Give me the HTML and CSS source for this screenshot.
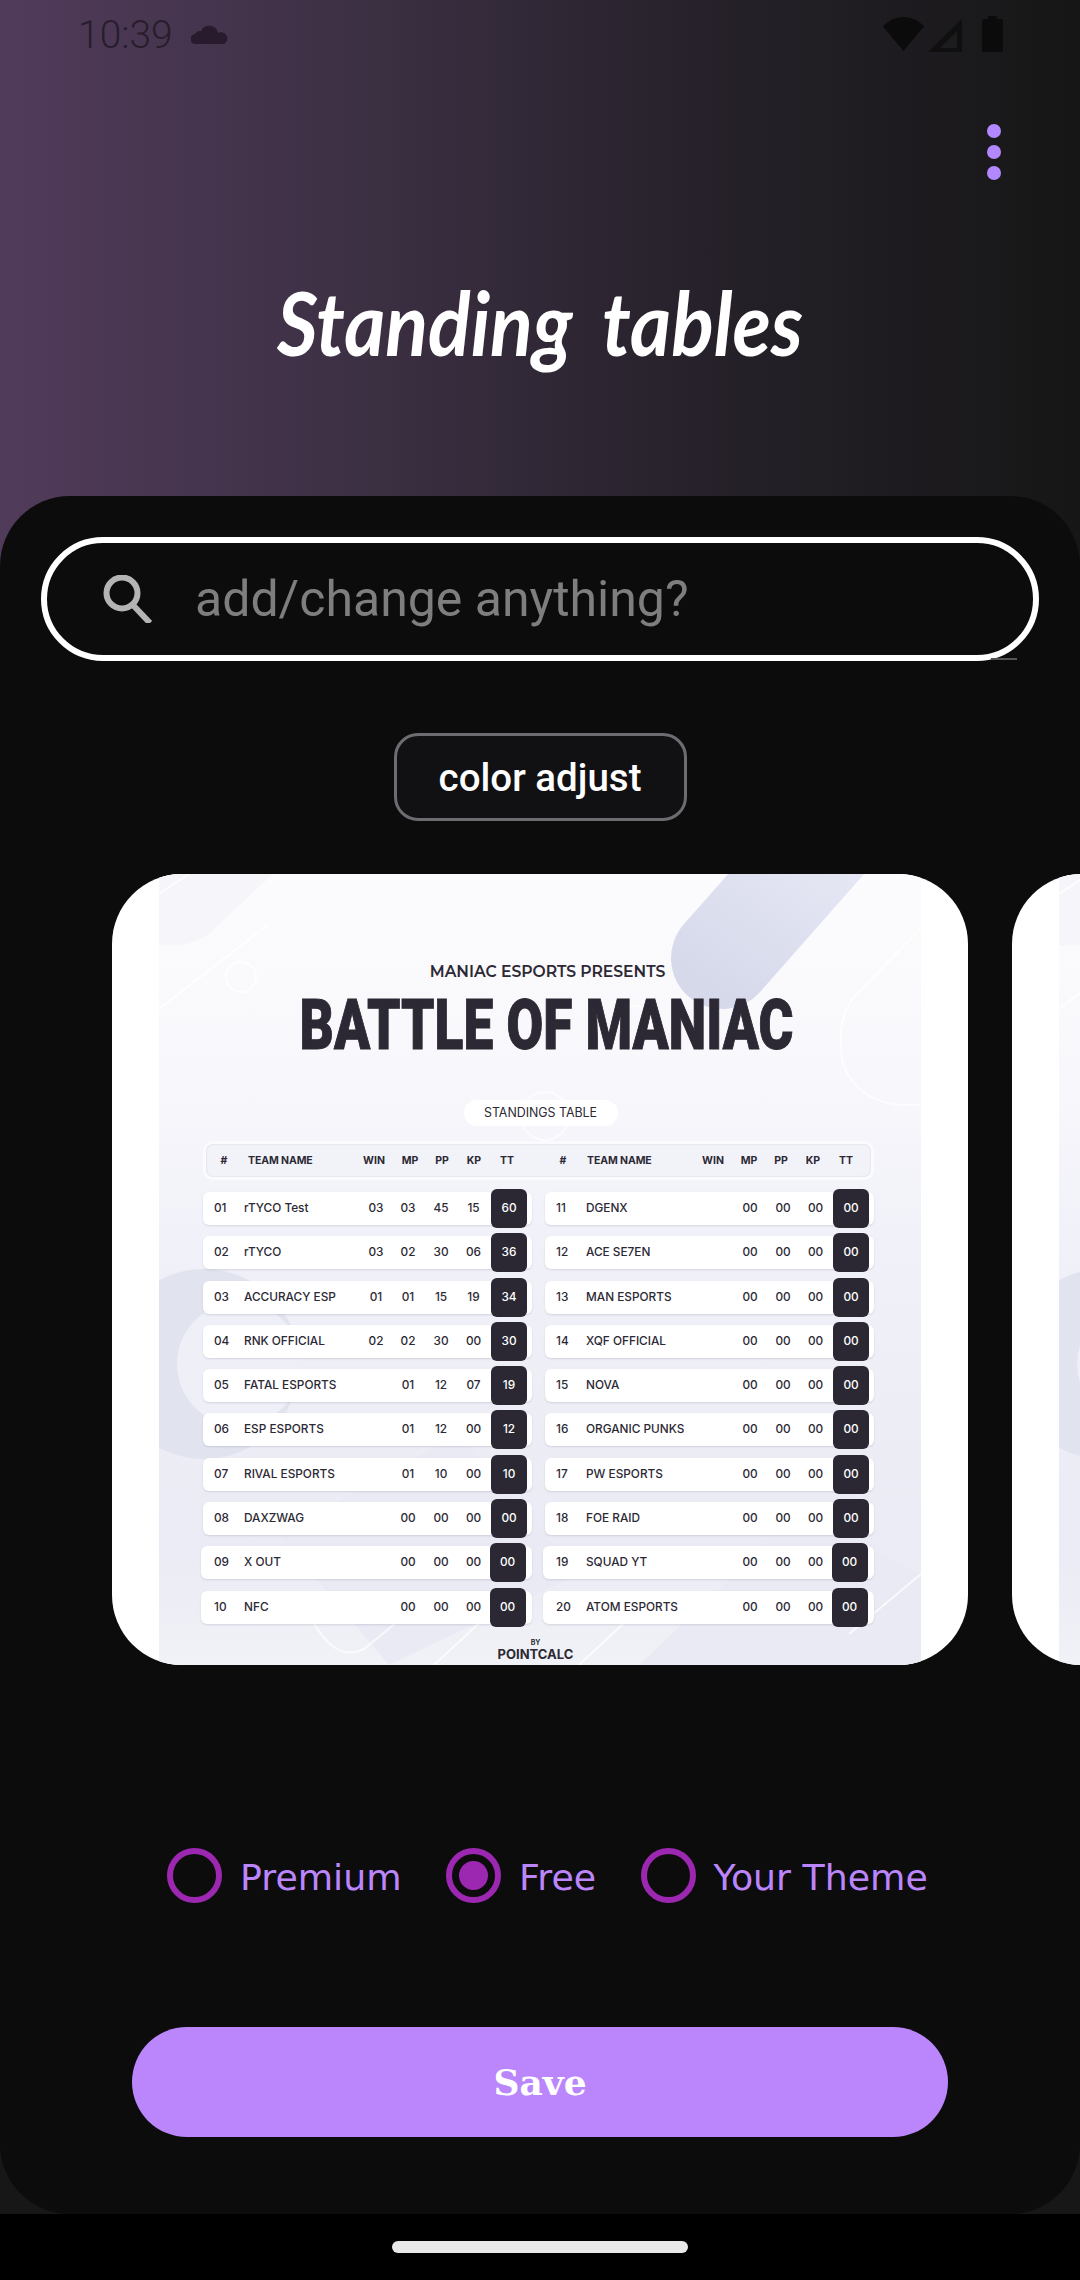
FILE: index.html
```html
<!DOCTYPE html>
<html lang="en">
<head>
    <meta charset="UTF-8">
    <meta name="viewport" content="width=device-width, initial-scale=1.0">
    <title>Standing tables</title>
    <link rel="stylesheet" href="styles.css">
</head>
<body>
    <svg class="defs" width="0" height="0">
        <defs>
            <linearGradient id="pillFill" gradientUnits="userSpaceOnUse" x1="560" y1="120" x2="660" y2="-40">
                <stop offset="0" stop-color="#d6d9ea"/>
                <stop offset="1" stop-color="#e6e8f5"/>
            </linearGradient>
            <g id="posterArt">
                <circle cx="45" cy="490" r="95" fill="#e1e3ef"/>
                <circle cx="80" cy="490" r="62" fill="#eeeff7"/>
                <path d="M120 660 L300 560 L420 700 L230 791 Z" fill="#e9eaf4"/>
                <path d="M480 791 L640 640 L762 700 L762 791 Z" fill="#e9eaf3"/>
                <path d="M563 84 L713 -86" stroke="url(#pillFill)" stroke-width="102" stroke-linecap="round" fill="none"/>
                <path d="M0 71 Q40 75 60 50 L114 0 L0 0 Z" fill="#f6f6fa"/>
                <g class="art-lines">
                    <path d="M762 54 L694 124 Q676 150 684 190 Q700 235 762 231"/>
                    <circle cx="476" cy="148" r="16"/>
                    <circle cx="386" cy="242" r="24"/>
                    <circle cx="82" cy="103" r="15"/>
                    <path d="M0 135 L110 50"/>
                    <path d="M0 20 L30 0"/>
                    <path d="M762 700 L690 760"/>
                    <path d="M150 740 Q175 790 205 775 L260 730"/>
                    <path d="M275 791 L330 740"/>
                    <path d="M420 791 L480 735"/>
                </g>
            </g>
        </defs>
    </svg>

    <header class="top">
        <div class="statusbar">
            <div class="status-left">
                <span class="clock">10:39</span>
                <svg class="cloud" viewBox="0 0 38 21"><path d="M5 21a5 5 0 0 1-1-10 6 6 0 0 1 6-3 9 9 0 0 1 17 2 6 6 0 0 1 6 11z"/></svg>
            </div>
            <div class="status-right">
                <svg class="wifi" viewBox="0 0 41 34"><path d="M20.500 34 0 9.500C5.500 3.500 12.500 0 20.500 0S35.500 3.500 41 9.500z"/></svg>
                <svg class="signal" viewBox="0 0 34 33"><path fill-rule="evenodd" d="M34 0v33H0zM29 12 12 29h17z"/><path class="signal-low" d="M14 29 29 14v15z"/></svg>
                <svg class="battery" viewBox="0 0 21 36"><path d="M6 0h9v3h4a2 2 0 0 1 2 2v29a2 2 0 0 1-2 2H2a2 2 0 0 1-2-2V5a2 2 0 0 1 2-2h4z"/></svg>
            </div>
        </div>
        <div class="menu-row">
            <div class="menu-dots"><i></i><i></i><i></i></div>
        </div>
        <h1 class="page-title">Standing tables</h1>
    </header>

    <main class="sheet">
        <div class="search">
            <svg class="search-icon" viewBox="0 0 50 48"><circle cx="19" cy="18" r="15.500"/><path d="M29 29 47 48"/></svg>
            <span class="search-text">add/change anything?</span>
        </div>

        <button class="adjust-btn">color adjust</button>

        <div class="carousel">
            <div class="card">
                <div class="poster">
                    <svg class="poster-art" viewBox="0 0 762 791"><use href="#posterArt"/></svg>
                    <div class="poster-by">MANIAC ESPORTS PRESENTS</div>
                    <div class="poster-title">BATTLE OF MANIAC</div>
                    <div class="poster-pill">STANDINGS TABLE</div>

                    <div class="head-bar">
                        <div class="head-side">
                            <span>#</span><span class="head-name">TEAM NAME</span><span>WIN</span><span>MP</span><span>PP</span><span>KP</span><span>TT</span>
                        </div>
                        <div class="head-side">
                            <span>#</span><span class="head-name">TEAM NAME</span><span>WIN</span><span>MP</span><span>PP</span><span>KP</span><span>TT</span>
                        </div>
                    </div>

                    <div class="tables">
                        <div class="rows">
                            <div class="row"><span>01</span><span class="name">rTYCO Test</span><span>03</span><span>03</span><span>45</span><span>15</span><b>60</b></div>
                            <div class="row"><span>02</span><span class="name">rTYCO</span><span>03</span><span>02</span><span>30</span><span>06</span><b>36</b></div>
                            <div class="row"><span>03</span><span class="name">ACCURACY ESP</span><span>01</span><span>01</span><span>15</span><span>19</span><b>34</b></div>
                            <div class="row"><span>04</span><span class="name">RNK OFFICIAL</span><span>02</span><span>02</span><span>30</span><span>00</span><b>30</b></div>
                            <div class="row"><span>05</span><span class="name">FATAL ESPORTS</span><span></span><span>01</span><span>12</span><span>07</span><b>19</b></div>
                            <div class="row"><span>06</span><span class="name">ESP ESPORTS</span><span></span><span>01</span><span>12</span><span>00</span><b>12</b></div>
                            <div class="row"><span>07</span><span class="name">RIVAL ESPORTS</span><span></span><span>01</span><span>10</span><span>00</span><b>10</b></div>
                            <div class="row"><span>08</span><span class="name">DAXZWAG</span><span></span><span>00</span><span>00</span><span>00</span><b>00</b></div>
                            <div class="row low"><span>09</span><span class="name">X OUT</span><span></span><span>00</span><span>00</span><span>00</span><b>00</b></div>
                            <div class="row low"><span>10</span><span class="name">NFC</span><span></span><span>00</span><span>00</span><span>00</span><b>00</b></div>
                        </div>
                        <div class="rows">
                            <div class="row"><span>11</span><span class="name">DGENX</span><span></span><span>00</span><span>00</span><span>00</span><b>00</b></div>
                            <div class="row"><span>12</span><span class="name">ACE SE7EN</span><span></span><span>00</span><span>00</span><span>00</span><b>00</b></div>
                            <div class="row"><span>13</span><span class="name">MAN ESPORTS</span><span></span><span>00</span><span>00</span><span>00</span><b>00</b></div>
                            <div class="row"><span>14</span><span class="name">XQF OFFICIAL</span><span></span><span>00</span><span>00</span><span>00</span><b>00</b></div>
                            <div class="row"><span>15</span><span class="name">NOVA</span><span></span><span>00</span><span>00</span><span>00</span><b>00</b></div>
                            <div class="row"><span>16</span><span class="name">ORGANIC PUNKS</span><span></span><span>00</span><span>00</span><span>00</span><b>00</b></div>
                            <div class="row"><span>17</span><span class="name">PW ESPORTS</span><span></span><span>00</span><span>00</span><span>00</span><b>00</b></div>
                            <div class="row"><span>18</span><span class="name">FOE RAID</span><span></span><span>00</span><span>00</span><span>00</span><b>00</b></div>
                            <div class="row low"><span>19</span><span class="name">SQUAD YT</span><span></span><span>00</span><span>00</span><span>00</span><b>00</b></div>
                            <div class="row low"><span>20</span><span class="name">ATOM ESPORTS</span><span></span><span>00</span><span>00</span><span>00</span><b>00</b></div>
                        </div>
                    </div>

                    <div class="credit">
                        <small>BY</small>
                        <strong>POINTCALC</strong>
                    </div>
                </div>
            </div>
            <div class="card">
                <div class="poster">
                    <svg class="poster-art" viewBox="0 0 762 791"><use href="#posterArt"/></svg>
                </div>
            </div>
        </div>

        <div class="plans">
            <label class="plan"><span class="radio"></span><span class="plan-text">Premium</span></label>
            <label class="plan"><span class="radio checked"></span><span class="plan-text">Free</span></label>
            <label class="plan"><span class="radio"></span><span class="plan-text">Your Theme</span></label>
        </div>

        <button class="save-btn">Save</button>
    </main>

    <footer class="navbar"><span class="nav-handle"></span></footer>
</body>
</html>
```
FILE: styles.css
```css
* {
    box-sizing: border-box;
}
html, body {
    margin: 0;
    padding: 0;
}
body {
    width: 1080px;
    height: 2280px;
    overflow: hidden;
    display: flex;
    flex-direction: column;
    background: linear-gradient(90deg, #513b5b 0%, #3b2f42 35%, #26212a 65%, #161616 100%) top / 100% 600px no-repeat, #171717;
    font-family: Roboto, sans-serif;
}
.defs {
    position: absolute;
}

/* top part */
.top {
    height: 496px;
    flex: none;
}
.statusbar {
    height: 70px;
    padding: 16px 77px 0 78px;
    display: flex;
    justify-content: space-between;
    align-items: flex-start;
}
.status-left {
    display: flex;
    align-items: center;
    gap: 18px;
    height: 38px;
}
.clock {
    font-size: 39px;
    font-weight: 300;
    line-height: 38px;
    color: #271d2c;
}
.cloud {
    width: 38px;
    height: 21px;
    fill: #271b2d;
    margin-top: -4px;
}
.status-right {
    display: flex;
    align-items: flex-start;
    gap: 4px;
}
.wifi {
    width: 41px;
    height: 34px;
    margin-top: 1px;
    fill: #0b0b0b;
}
.signal {
    width: 34px;
    height: 33px;
    margin-top: 3px;
    margin-right: 16px;
    fill: #0f0f0f;
}
.signal .signal-low {
    fill: #1c1c1e;
}
.battery {
    width: 21px;
    height: 36px;
    fill: #0b0b0b;
}
.menu-row {
    display: flex;
    justify-content: flex-end;
    padding: 54px 79px 0 0;
}
.menu-dots {
    display: flex;
    flex-direction: column;
    gap: 7px;
}
.menu-dots i {
    display: block;
    width: 14px;
    height: 14px;
    border-radius: 50%;
    background: #b388ff;
}
.page-title {
    margin: 92px 0 0;
    text-align: center;
    font-family: Lato, sans-serif;
    font-style: italic;
    font-weight: 700;
    font-size: 88px;
    line-height: 100px;
    word-spacing: 14px;
    white-space: nowrap;
    transform: scaleX(0.897);
    color: #fff;
}

/* dark sheet */
.sheet {
    height: 1718px;
    flex: none;
    background: #0c0c0d;
    border-radius: 70px;
    padding-top: 41px;
    display: flex;
    flex-direction: column;
    align-items: center;
}
.search {
    position: relative;
    width: 998px;
    height: 124px;
    border: 6px solid #fff;
    border-radius: 62px;
    display: flex;
    align-items: center;
    padding-left: 56px;
}
.search::after {
    content: "";
    position: absolute;
    right: 16px;
    bottom: -5px;
    width: 26px;
    height: 2px;
    background: #555;
}
.search-icon {
    width: 50px;
    height: 48px;
    fill: none;
    stroke: #b4b4b4;
    stroke-width: 6;
}
.search-text {
    margin-left: 42px;
    font-size: 50px;
    color: #7e7e7e;
}
.adjust-btn {
    margin-top: 72px;
    width: 293px;
    height: 88px;
    border: 3px solid #6d6c71;
    border-radius: 24px;
    background: #111113;
    color: #fff;
    font-family: Roboto, sans-serif;
    font-weight: 500;
    font-size: 38.500px;
    padding: 0;
}
.carousel {
    margin-top: 53px;
    align-self: stretch;
    padding-left: 112px;
    display: flex;
    gap: 44px;
    overflow: hidden;
    flex: none;
}
.card {
    flex: none;
    width: 856px;
    height: 791px;
    border-radius: 70px;
    background: #fff;
    overflow: hidden;
    display: flex;
    justify-content: center;
}

/* the poster image inside the card */
.poster {
    position: relative;
    width: 762px;
    height: 791px;
    background: linear-gradient(180deg, #fcfcfe 0%, #f8f8fc 25%, #f1f1f9 45%, #ecedf5 70%, #eaebf4 85%, #f1f2f7 100%);
    padding: 86px 47px 0 44px;
    color: #2c2934;
    font-family: Inter, sans-serif;
    display: flex;
    flex-direction: column;
}
.poster > * {
    position: relative;
}
.poster .poster-art {
    position: absolute;
    left: 0;
    top: 0;
    width: 762px;
    height: 791px;
    overflow: hidden;
}
.art-lines {
    fill: none;
    stroke: #fff;
    stroke-width: 2;
    opacity: 0.75;
}
.poster-by {
    text-align: center;
    padding-left: 18px;
    font-family: Montserrat, Inter, sans-serif;
    font-weight: 600;
    font-size: 15.600px;
    line-height: 24px;
    white-space: nowrap;
}
.poster-title {
    margin-top: 9px;
    height: 64px;
    text-align: center;
    padding-left: 21px;
    font-family: Roboto, sans-serif;
    font-weight: 900;
    font-size: 70px;
    line-height: 64px;
    white-space: nowrap;
    -webkit-text-stroke: 1px #2c2934;
    transform: scaleX(0.76);
}
.poster-pill {
    align-self: center;
    margin: 43px 0 0 4px;
    width: 154px;
    height: 26px;
    border-radius: 13px;
    background: #fff;
    text-align: center;
    font-size: 12.400px;
    font-weight: 400;
    line-height: 26px;
    white-space: nowrap;
}
.head-bar {
    margin-top: 15px;
    height: 39px;
    border: 3px solid #fbfbfe;
    border-radius: 10px;
    background: #f2f3f9;
    box-shadow: inset 0 0 2px rgba(60, 60, 90, 0.2);
    display: flex;
    gap: 13px;
    font-size: 10.500px;
    font-weight: 700;
    line-height: 33px;
}
.head-side {
    flex: 1;
    display: grid;
    grid-template-columns: 30px 115px 40px 32px 32px 32px 34px;
    justify-items: center;
    padding-left: 3px;
}
.head-name {
    justify-self: start;
    margin-left: 9px;
    letter-spacing: -0.1px;
}
.tables {
    margin-top: 12px;
    display: flex;
    gap: 13px;
}
.rows {
    width: 329px;
    flex: none;
    display: flex;
    flex-direction: column;
    gap: 11.300px;
}
.row {
    height: 33px;
    background: #fff;
    border-radius: 6px;
    box-shadow: 0 1px 2px rgba(60, 60, 90, 0.15);
    padding: 0 5px 0 11px;
    display: grid;
    grid-template-columns: 30px 116px 32px 32px 34px 31px 38px;
    align-items: center;
    font-size: 11.800px;
    font-weight: 500;
    line-height: 33px;
}
.row span {
    text-align: center;
}
.row span:first-child,
.row .name {
    text-align: left;
    white-space: nowrap;
}
.row b {
    justify-self: end;
    width: 36px;
    height: 39px;
    margin: -3px 0;
    border-radius: 6px;
    background: #2b2833;
    color: #fff;
    font-weight: 500;
    text-align: center;
    line-height: 39px;
}
.row.low {
    margin-left: -2px;
    padding-left: 13px;
}
.row.low b {
    margin-right: 1.500px;
}
.credit {
    margin-top: 15px;
    padding-left: 265px;
    width: 400px;
    display: flex;
    flex-direction: column;
    align-items: center;
}
.credit small {
    font-size: 7px;
    font-weight: 700;
    line-height: 8px;
}
.credit strong {
    font-size: 13px;
    font-weight: 700;
    line-height: 14px;
}

/* radios and save */
.plans {
    margin-top: 183px;
    align-self: stretch;
    padding-left: 167px;
    display: flex;
    color: #bb86fc;
    font-family: "DejaVu Sans", sans-serif;
    font-size: 36.300px;
}
.plan {
    display: flex;
    align-items: center;
    gap: 18px;
    margin-right: 44.500px;
}
.plan-text {
    margin-top: 3px;
}
.radio {
    width: 55px;
    height: 55px;
    border: 6px solid #9c27b0;
    border-radius: 50%;
    display: flex;
    align-items: center;
    justify-content: center;
}
.radio.checked::before {
    content: "";
    width: 29px;
    height: 29px;
    border-radius: 50%;
    background: #9c27b0;
}
.save-btn {
    margin-top: 124px;
    width: 816px;
    height: 110px;
    border: none;
    border-radius: 55px;
    background: #bb86fc;
    color: #fff;
    font-family: "DejaVu Serif", serif;
    font-weight: 700;
    font-size: 36px;
}

.navbar {
    flex: 1;
    background: #000;
    display: flex;
    justify-content: center;
    padding-top: 27px;
}
.nav-handle {
    width: 296px;
    height: 12px;
    border-radius: 6px;
    background: #e9e9e9;
}
```
